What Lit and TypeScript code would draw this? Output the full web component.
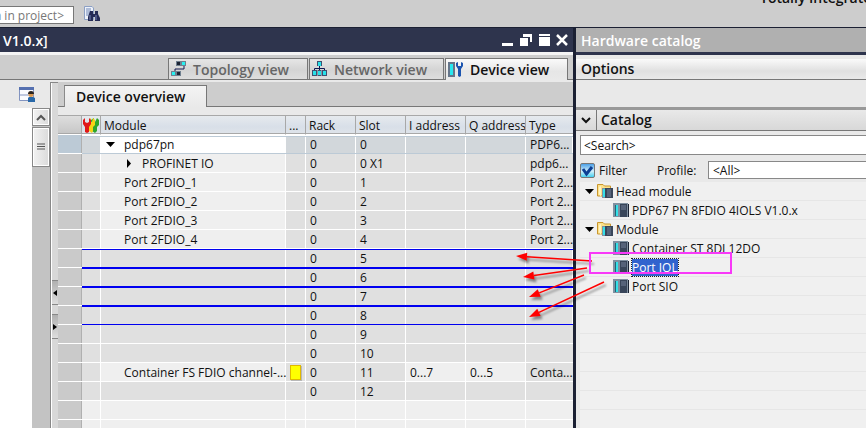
import { LitElement, html, css, svg, nothing } from "lit";
import { customElement, state } from "lit/decorators.js";
import { classMap } from "lit/directives/class-map.js";

interface Row {
  module?: string;
  level?: "open" | "closed";
  alarm?: boolean;
  rack?: string;
  slot?: string;
  inAddr?: string;
  outAddr?: string;
  type?: string;
  kind: "head" | "used" | "marked" | "free" | "container" | "blank";
}

const ROWS: Row[] = [
  { kind: "head", module: "pdp67pn", level: "open", rack: "0", slot: "0", type: "PDP6..." },
  { kind: "used", module: "PROFINET IO", level: "closed", rack: "0", slot: "0 X1", type: "pdp6..." },
  { kind: "used", module: "Port 2FDIO_1", rack: "0", slot: "1", type: "Port 2..." },
  { kind: "used", module: "Port 2FDIO_2", rack: "0", slot: "2", type: "Port 2..." },
  { kind: "used", module: "Port 2FDIO_3", rack: "0", slot: "3", type: "Port 2..." },
  { kind: "used", module: "Port 2FDIO_4", rack: "0", slot: "4", type: "Port 2..." },
  { kind: "marked", rack: "0", slot: "5" },
  { kind: "marked", rack: "0", slot: "6" },
  { kind: "marked", rack: "0", slot: "7" },
  { kind: "marked", rack: "0", slot: "8" },
  { kind: "free", rack: "0", slot: "9" },
  { kind: "free", rack: "0", slot: "10" },
  { kind: "container", module: "Container FS FDIO channel-...", alarm: true, rack: "0", slot: "11", inAddr: "0...7", outAddr: "0...5", type: "Conta..." },
  { kind: "free", rack: "0", slot: "12" },
  { kind: "blank" },
  { kind: "blank" },
];

interface Node {
  label: string;
  folder?: boolean;
  selected?: boolean;
}

const TREE: Node[] = [
  { label: "Head module", folder: true },
  { label: "PDP67 PN 8FDIO 4IOLS V1.0.x" },
  { label: "Module", folder: true },
  { label: "Container ST 8DI 12DO" },
  { label: "Port IOL", selected: true },
  { label: "Port SIO" },
];

const base = css`
  *, *::before, *::after { box-sizing: border-box; }
  svg { display: block; flex: none; }
  button, input, select { font: inherit; color: inherit; margin: 0; padding: 0; border-radius: 0; }
  button { border: 0; background: none; }
`;

@customElement("device-overview")
export class DeviceOverview extends LitElement {
  static styles = [base, css`
    :host { display: flex; flex-direction: column; flex: 1; min-width: 0; background: #f0f0f0; }
    .tabs { display: flex; flex: none; height: 25px; padding: 3px 0 0 6px; background: linear-gradient(#777, #777) bottom / 100% 1px no-repeat #cdcdcd; }
    .tab { height: 22px; width: 143px; border: 1px solid #777; border-bottom: 0; border-left-color: #8a8a8a; background: linear-gradient(#f4f4f4, #e9e9e9); font-size: 14px; font-weight: 600; line-height: 20px; text-align: left; padding-left: 11px; white-space: nowrap; color: #111; }
    .gap { flex: none; height: 8px; background: #e9e9e9; }
    table { width: 100%; table-layout: fixed; border-collapse: separate; border-spacing: 0; font-size: 12px; }
    .c-head { width: 24px; } .c-state { width: 19px; } .c-module { width: 185px; } .c-alarm { width: 20px; }
    .c-short { width: 50px; } .c-addr { width: 60px; }
    th { height: 20px; padding: 0 0 0 3px; line-height: 17px; border-top: 1px solid #a8a8a8; border-bottom: 1px solid #fff; border-right: 1px solid #a8a8a8; box-shadow: inset 0 -1px #a8a8a8; background: linear-gradient(#e6eaee, #d8dfe8 60%, #dfe4ea); font-weight: 400; text-align: left; white-space: nowrap; overflow: hidden; }
    th:first-child { background: linear-gradient(#dedede, #c6c6c6); }
    th:last-child { border-right: 0; }
    th.icon { padding: 0 0 0 1px; }
    td { height: 19px; padding: 0 0 0 4px; line-height: 18px; white-space: nowrap; overflow: hidden; background: #e0e0e0; box-shadow: inset 0 -1px #fff, inset -1px 0 #fff; }
    td:last-child { box-shadow: inset 0 -1px #fff; }
    .used .name, .container .name, .container .addr, .blank td { background: #efefef; }
    .head td { background: #d2d7db; box-shadow: inset 0 -1px #bccad6, inset 0 1px #fff, inset 0 2px #bccad6, inset -1px 0 #fff; }
    .head td.name { background: #fff; }
    .marked td { box-shadow: inset 0 1px #0000f0, inset 0 -1px #0000f0, inset -1px 0 #fff; }
    tr td:first-child { background: #cacaca; box-shadow: inset 0 -1px #fff, inset -1px 0 #b0b0b0; }
    .head td:first-child { background: #bccad6; }
    .line { display: flex; align-items: center; padding-left: 19px; height: 18px; }
    .line.node { padding-left: 1px; gap: 9px; }
    .line.child { padding-left: 19px; gap: 9px; }
    .alarm { display: block; width: 11px; height: 15px; background: #ff0; border: 1px solid #e0b800; box-shadow: 1px 1px #b8b8b8; }
  `];

  private cell(row: Row) {
    if (!row.module) return nothing;
    const arrow = row.level === "open"
      ? html`<svg width="9" height="9" aria-hidden="true"><path d="M0 2H9L4.500 7Z"></path></svg>`
      : row.level === "closed"
        ? html`<svg width="9" height="9" aria-hidden="true"><path d="M3 0V9L7 4.500Z"></path></svg>`
        : nothing;
    return html`<div class=${classMap({ line: true, node: row.level === "open", child: row.level === "closed" })}>${arrow}<span>${row.module}</span></div>`;
  }

  render() {
    return html`
      <div class="tabs"><button class="tab">Device overview</button></div>
      <div class="gap"></div>
      <table>
        <colgroup>
          <col class="c-head"><col class="c-state"><col class="c-module"><col class="c-alarm">
          <col class="c-short"><col class="c-short"><col class="c-addr"><col class="c-addr"><col>
        </colgroup>
        <thead>
          <tr>
            <th></th>
            <th class="icon">
              <svg width="16" height="15" viewBox="0 0 16 15" aria-label="Status">
                <path d="M8 2L11 0V4H12L14 0L16 2V7L14 9V13L12 15L9 13Z" fill="#2fa62c"></path>
                <path d="M6 2L8 0V4H9L10 0L12 2V7L10 9V13L9 15L6 13Z" fill="#f6d415"></path>
                <path d="M2 0V4L4 5L6 4V0L8 2V6L6 9V14L4 15L2 14V9L0 6V2Z" fill="#e01818"></path>
              </svg>
            </th>
            <th>Module</th><th>...</th><th>Rack</th><th>Slot</th><th>I address</th><th>Q address</th><th>Type</th>
          </tr>
        </thead>
        <tbody>
          ${ROWS.map((r) => html`
            <tr class=${r.kind}>
              <td></td><td></td>
              <td class="name">${this.cell(r)}</td>
              <td>${r.alarm ? html`<span class="alarm"></span>` : nothing}</td>
              <td>${r.rack}</td><td>${r.slot}</td>
              <td class="addr">${r.inAddr}</td><td class="addr">${r.outAddr}</td>
              <td>${r.type}</td>
            </tr>`)}
        </tbody>
      </table>
    `;
  }
}

@customElement("hardware-catalog")
export class HardwareCatalog extends LitElement {
  @state() private filter = true;

  static styles = [base, css`
    :host { position: relative; display: flex; flex-direction: column; flex: none; width: 293px; border-left: 3px solid #1b2033; background: #e9e9e9; }
    .title { flex: none; height: 27px; padding-left: 5px; line-height: 25px; background: #b0b0b0; border-bottom: 3px solid #2e344d; color: #fff; font-size: 14px; font-weight: 600; }
    .options { flex: none; height: 21px; margin-top: 4px; padding-left: 5px; line-height: 19px; font-size: 14px; font-weight: 600; border-bottom: 1px solid #777; background: linear-gradient(#fafafa, #e0e0e0 60%, #e9e9e9); }
    .section { display: flex; flex: none; height: 24px; margin-top: 27px; border-top: 3px solid #999; border-bottom: 1px solid #777; background: linear-gradient(#e9e9e9, #d8d8d8); }
    .fold { width: 21px; border-right: 1px solid #777; display: grid; place-items: center; }
    .name { padding-left: 4px; font-size: 14px; font-weight: 600; line-height: 20px; }
    .body { padding-left: 4px; font-size: 12px; }
    .search { display: block; width: 100%; height: 20px; margin-top: 4px; padding-left: 3px; border: 1px solid #888; border-right: 0; background: #fff; }
    .filters { display: flex; align-items: center; height: 18px; margin: 6px 0 3px; }
    .check { display: flex; align-items: center; gap: 4px; width: 77px; }
    .box { display: grid; width: 15px; height: 15px; }
    .box input { grid-area: 1 / 1; appearance: none; width: 15px; height: 15px; border: 1px solid #777; border-radius: 2px; background: linear-gradient(#4aa0e8, #d4f0fa 55%, #45d0f0); }
    .box svg { grid-area: 1 / 1; pointer-events: none; }
    .profile { width: 51px; }
    select { appearance: none; flex: 1; height: 18px; padding-left: 4px; border: 1px solid #888; border-right: 0; background: #fff; }
    .tree { list-style: none; margin: 0; padding: 0; background: #f0f0f0; }
    .item { display: flex; align-items: center; gap: 3px; height: 19px; padding-left: 33px; border-bottom: 1px solid #e6e6e6; white-space: nowrap; }
    .folder { padding-left: 5px; }
    .selected .label { background: #3163ce; color: #fff; outline: 1px dotted #222; line-height: 17px; }
    .notes { position: absolute; left: -60px; top: 216px; pointer-events: none; filter: drop-shadow(2px 3px 1px rgba(0, 0, 0, 0.4)); }
    .frame { position: absolute; left: 13px; top: 224px; width: 143px; height: 22px; border: 2px solid #f838f8; pointer-events: none; }
  `];

  private moduleIcon() {
    return html`<svg width="16" height="15" viewBox="0 0 16 15" aria-hidden="true">
      <path d="M0 0H15V14H0Z" fill="#8090a0"></path><path d="M2 2H5V13H2Z" fill="#35e0e8"></path><path d="M2 2H3V13H2Z" fill="#1c6878"></path>
      <path d="M7 1H14V14H7Z" fill="#39465a"></path><path d="M8 2H13V7H8Z" fill="#56637a"></path>
      <path d="M1 14H16V1H15V14Z" fill="#1c2434"></path></svg>`;
  }

  private folderIcon() {
    return html`<svg width="9" height="5" aria-hidden="true"><path d="M0 0H9L4.500 5Z"></path></svg>
      <svg width="16" height="16" viewBox="0 0 16 16" aria-hidden="true">
      <path d="M0.500 13V1.500H6L7.500 3H13.500V13Z" fill="#fbe08a" stroke="#c9962e"></path>
      <path d="M2 11V4L4 3V14Z" fill="#fff3c0"></path>
      <path d="M5 5H8V15H5Z" fill="#8090a0"></path><path d="M6 6H8V14H6Z" fill="#35e0e8"></path>
      <path d="M8 5H16V15H8Z" fill="#39465a"></path><path d="M10 6H14V14H10Z" fill="#56637a"></path></svg>`;
  }

  private arrow(x1: number, y1: number, x2: number, y2: number) {
    const len = Math.hypot(x2 - x1, y2 - y1);
    const ux = (x2 - x1) / len;
    const uy = (y2 - y1) / len;
    const bx = x2 - ux * 11;
    const by = y2 - uy * 11;
    return svg`<path d="M${x1} ${y1}L${bx} ${by}" stroke="#f00" stroke-width="1.5"></path>
      <path d="M${x2} ${y2}L${bx - uy * 4} ${by + ux * 4}L${bx + uy * 4} ${by - ux * 4}Z" fill="#f00"></path>`;
  }

  render() {
    return html`
      <div class="title">Hardware catalog</div>
      <div class="options">Options</div>
      <div class="section">
        <button class="fold" aria-label="Collapse catalog"><svg width="10" height="7" viewBox="0 0 10 7"><path d="M1 1L5 5L9 1" fill="none" stroke="#111" stroke-width="2"></path></svg></button>
        <div class="name">Catalog</div>
      </div>
      <div class="body">
        <input class="search" aria-label="Search catalog" .value=${"<Search>"}>
        <div class="filters">
          <label class="check"><span class="box">
            <input type="checkbox" .checked=${this.filter} @change=${(e: Event) => { this.filter = (e.target as HTMLInputElement).checked; }}>
            ${this.filter ? html`<svg width="15" height="15"><path d="M3 6L6.500 11L12 4" fill="none" stroke="#0c3f94" stroke-width="3"></path></svg>` : nothing}
          </span>Filter</label>
          <label class="profile" for="profile">Profile:</label>
          <select id="profile"><option>&lt;All&gt;</option></select>
        </div>
        <ul class="tree">
          ${TREE.map((n) => html`<li class=${classMap({ item: true, folder: !!n.folder, selected: !!n.selected })}>
            ${n.folder ? this.folderIcon() : this.moduleIcon()}<span class="label">${n.label}</span></li>`)}
          ${[0, 1, 2, 3, 4, 5, 6].map(() => html`<li class="item"></li>`)}
        </ul>
      </div>
      <svg class="notes" width="100" height="84" viewBox="0 0 100 84" aria-hidden="true">
        ${this.arrow(76, 17, 0, 12)}${this.arrow(71, 24, 7, 33)}${this.arrow(68, 31, 13, 53)}${this.arrow(88, 38, 13, 73)}
      </svg>
      <div class="frame"></div>
    `;
  }
}

@customElement("app-root")
export class AppRoot extends LitElement {
  static styles = [base, css`
    :host { display: flex; flex-direction: column; height: 100vh; overflow: hidden; background: #cdcdcd; color: #111; font-family: "Open Sans", "Noto Sans", sans-serif; font-size: 12px; }
    .toolbar { display: flex; flex: none; align-items: flex-start; height: 28px; border-bottom: 1px solid #1b2033; overflow: hidden; }
    .find { flex: none; width: 124px; height: 18px; margin: 6px 10px 0 -50px; padding-right: 9px; border: 1px solid #777; background: #fff; color: #777; text-align: right; }
    .binoculars { margin-top: 6px; }
    .brand { flex: none; width: 106px; height: 20px; margin: -12px 0 0 auto; font-size: 14px; font-weight: 600; line-height: 20px; white-space: nowrap; }
    .work { display: flex; flex: 1; min-height: 0; }
    .editor { display: flex; flex-direction: column; flex: 1; min-width: 0; }
    .title { display: flex; align-items: center; flex: none; height: 24px; padding: 0 5px 0 3px; background: #2e344d; color: #fff; font-size: 14px; font-weight: 600; }
    .caption { flex: 1; }
    .windows { display: flex; gap: 6px; }
    .views { display: flex; flex: none; justify-content: flex-end; gap: 1px; height: 28px; padding: 3px 5px 0 0; border-top: 3px solid #f4f4f4; background: linear-gradient(#777, #777) 0 24px / 100% 1px no-repeat, linear-gradient(#e9e9e9, #e9e9e9) 0 25px / 100% 3px no-repeat; }
    .view { display: flex; align-items: center; gap: 6px; height: 22px; padding: 0 0 0 2px; border: 1px solid #777; background: linear-gradient(#e6e6e6, #d4d4d4 55%, #dedede); color: #666; font-size: 14px; font-weight: 600; white-space: nowrap; }
    .wide { width: 140px; }
    .mid { width: 135px; }
    .active { width: 123px; color: #111; border-bottom: 0; background: linear-gradient(#fafafa, #e6e6e6 60%, #e9e9e9); }
    .content { display: flex; flex: 1; min-height: 0; padding-top: 2px; background: #e9e9e9; }
    .left { display: flex; flex-direction: column; flex: none; width: 50px; }
    .tools { display: flex; justify-content: flex-end; height: 26px; padding: 5px 15px 0 0; }
    .canvas { display: flex; flex: 1; justify-content: flex-end; background: #fff; }
    .bar { width: 18px; background: #c3c3c3; }
    .up, .thumb { display: grid; place-items: center; width: 18px; border: 1px solid #888; box-shadow: inset 0 0 0 1px #fff; background: linear-gradient(90deg, #f2f2f2, #dadada); }
    .up { height: 18px; }
    .thumb { height: 40px; margin-top: 1px; }
    .splitter { display: flex; flex-direction: column; flex: none; width: 8px; padding-top: 197px; gap: 9px; border-left: 1px solid #888; border-top: 1px solid #888; background: #d8d8d8; box-shadow: inset 1px 0 #fff; }
    .snap { display: grid; place-items: center; width: 6px; height: 25px; margin-left: 1px; border-top: 1px solid #888; border-bottom: 1px solid #888; background: linear-gradient(#b0b0b0, #dedede); }
  `];

  render() {
    return html`
      <header class="toolbar">
        <input class="find" aria-label="Search in project" .value=${"<Search in project>"}>
        <svg class="binoculars" width="16" height="16" viewBox="0 0 16 16" aria-label="Find">
          <path d="M0.500 0.500H8L9.500 2V13.500H0.500Z" fill="#eef2fa" stroke="#8da0c4"></path>
          <path d="M2 3H7M2 5H7M2 7H6M2 9H5" stroke="#7088b8"></path>
          <path d="M6 5H9V8H11V5H14V8L16 12V15H11V11H9V15H4V11Z" fill="#252b55"></path>
          <path d="M6 9V14M12 9V14" stroke="#7684b8"></path>
        </svg>
        <div class="brand">Totally Integrated Automation</div>
      </header>
      <div class="work">
        <main class="editor">
          <div class="title">
            <span class="caption">V1.0.x]</span>
            <span class="windows">
              <button aria-label="Minimize"><svg width="12" height="12"><path d="M1 9H12V12H1Z" fill="#fff"></path></svg></button>
              <button aria-label="Restore"><svg width="13" height="12"><path d="M4 0H13V8H11V3H4ZM1 4H9V12H1Z" fill="#fff"></path></svg></button>
              <button aria-label="Maximize"><svg width="12" height="12"><path d="M1 0H12V2H1ZM1 3H12V12H1Z" fill="#fff"></path></svg></button>
              <button aria-label="Close"><svg width="12" height="12"><path d="M1 1L11 11M11 1L1 11" stroke="#fff" stroke-width="2.500"></path></svg></button>
            </span>
          </div>
          <nav class="views">
            <button class="view wide">
              <svg width="16" height="16" viewBox="0 0 16 16"><path d="M13 5V8H4V11" fill="none" stroke="#101850"></path>
                <path d="M5 0H15V5H5ZM0 10H10V15H0Z" fill="#708090"></path><path d="M6 1H9V4H6ZM6 11H9V14H6Z" fill="#1c2434"></path><path d="M11 1H14V4H11ZM1 11H4V14H1Z" fill="#28f0f0"></path></svg>
              Topology view</button>
            <button class="view mid">
              <svg width="16" height="16" viewBox="0 0 16 16"><path d="M7.500 5V10M2.500 10V7.500H12.500V10" fill="none" stroke="#101850"></path>
                <path d="M5 0H10V5H5ZM0 9H5V15H0ZM5.500 9H9.500V15H5.500ZM10 9H15V15H10Z" fill="#405070"></path><path d="M6 1H9V5H6ZM1 10H4V14H1ZM6 10H9V14H6ZM11 10H14V14H11Z" fill="#28e0e8"></path></svg>
              Network view</button>
            <button class="view active">
              <svg width="16" height="16" viewBox="0 0 16 16"><path d="M0 0H7V15H0Z" fill="#65758a"></path><path d="M2 2H5V13H2Z" fill="#28e8f0"></path>
                <path d="M8 1V4L10 7V14L11.500 15L13 14V7L15 4V1L13 0V4H10V0Z" fill="#1c55b0"></path></svg>
              Device view</button>
          </nav>
          <div class="content">
            <div class="left">
              <div class="tools"><svg width="16" height="16" viewBox="0 0 16 16" aria-label="Show details">
                <path d="M0.500 0.500H14.500V13.500H0.500Z" fill="#fafcff" stroke="#8294c0"></path><path d="M0 0H15V3H0Z" fill="#5570b0"></path><path d="M1 8H10" stroke="#8294c0"></path>
                <path d="M9 15V11L10 10H14L16 11V15Z" fill="#2868a8"></path><circle cx="12" cy="7.500" r="2.500" fill="#d89850"></circle><path d="M9 7Q9 4 12 4T15 7Z" fill="#2a2420"></path></svg></div>
              <div class="canvas"><div class="bar">
                <button class="up" aria-label="Scroll up"><svg width="10" height="7"><path d="M1 6L5 2L9 6" fill="none" stroke="#555" stroke-width="2"></path></svg></button>
                <div class="thumb"><svg width="8" height="8"><path d="M0 1H8M0 3.500H8M0 6H8" stroke="#555"></path></svg></div>
              </div></div>
            </div>
            <div class="splitter">
              <button class="snap" aria-label="Collapse left"><svg width="4" height="6"><path d="M4 0V6L0 3Z"></path></svg></button>
              <button class="snap" aria-label="Collapse right"><svg width="4" height="6"><path d="M0 0V6L4 3Z"></path></svg></button>
            </div>
            <device-overview></device-overview>
          </div>
        </main>
        <hardware-catalog></hardware-catalog>
      </div>
    `;
  }
}
